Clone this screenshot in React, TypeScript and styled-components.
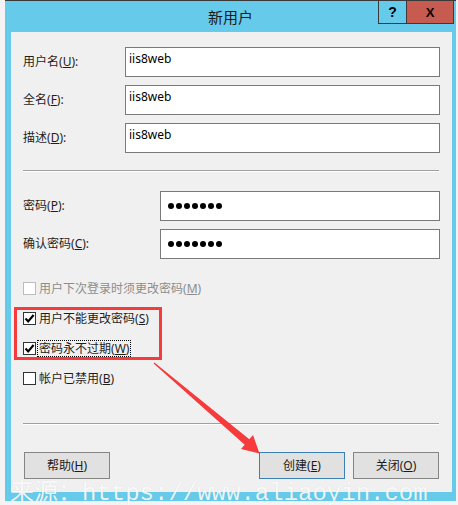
import React from "react";
import styled, { createGlobalStyle } from "styled-components";

const Global = createGlobalStyle`
  html, body { margin: 0; padding: 0; background: #f3f3f3; }
  body {
    width: 458px; height: 505px; overflow: hidden;
    font-family: "Noto Sans", "Noto Sans CJK SC", sans-serif;
  }
`;

const Stage = styled.div`
  position: relative;
  width: 458px;
  height: 505px;
  padding-left: 5px;
  box-sizing: border-box;
  overflow: hidden;
`;

const Frame = styled.div`
  width: 451px;
  height: 501px;
  box-sizing: border-box;
  background: #66caea;
  border-top: 1px solid #3a3a3a;
  display: flex;
  flex-direction: column;
`;

const TitleBar = styled.div`
  flex: none;
  height: 31px;
  display: grid;
`;

const Title = styled.div`
  grid-area: 1 / 1;
  justify-self: center;
  align-self: center;
  font-family: "Noto Sans CJK SC", sans-serif;
  font-size: 15px;
  color: #1a1a1a;
  line-height: 20px;
`;

const CaptionButtons = styled.div`
  grid-area: 1 / 1;
  justify-self: end;
  align-self: start;
  margin-right: 2px;
  display: flex;
  height: 22px;
  border: 1px solid #3a3a3a;
  border-top: none;
`;

const CaptionButton = styled.div<{ $w: number; $bg: string; $size: number }>`
  width: ${(p) => p.$w}px;
  height: 22px;
  background: ${(p) => p.$bg};
  display: flex;
  align-items: center;
  justify-content: center;
  font-family: "Liberation Sans", Arial, sans-serif;
  font-weight: 900;
  font-size: ${(p) => p.$size}px;
  color: #000;
  & + & { border-left: 1px solid #3a3a3a; }
`;

const Content = styled.div`
  position: relative;
  flex: 1;
  margin: 0 4px 9px 6px;
  background: #f0f0f0;
  padding: 15px 12px 0 12px;
  display: flex;
  flex-direction: column;
`;

const FieldGroup = styled.div<{ $mt: number }>`
  display: flex;
  flex-direction: column;
  gap: 8px;
  margin-top: ${(p) => p.$mt}px;
`;

const FieldRow = styled.div<{ $labelW: number }>`
  display: grid;
  grid-template-columns: ${(p) => p.$labelW}px 1fr;
  align-items: center;
  height: 30px;
`;

const Label = styled.div`
  font-size: 12px;
  line-height: 16px;
  color: #1e1e1e;
  white-space: nowrap;
`;

const TextBox = styled.div`
  height: 30px;
  box-sizing: border-box;
  background: #fff;
  border: 1px solid #7a7a7a;
  padding: 3px 3px 0 3px;
  font-size: 12px;
  line-height: 16px;
  color: #000;
`;

const DotRow = styled.div`
  display: flex;
  gap: 2px;
  padding: 8px 0 0 4px;
`;

const Dot = styled.span`
  width: 6px;
  height: 6px;
  border-radius: 50%;
  background: #000;
`;

const Separator = styled.div<{ $mt: number }>`
  margin-top: ${(p) => p.$mt}px;
  margin-right: 1px;
  height: 0;
  border-top: 1px solid #a0a0a0;
  border-bottom: 1px solid #ffffff;
`;

const CheckList = styled.div`
  margin-top: 14px;
  display: flex;
  flex-direction: column;
`;

const CheckRow = styled.div<{ $disabled?: boolean }>`
  height: 30px;
  display: flex;
  align-items: center;
  gap: 1px;
  color: ${(p) => (p.$disabled ? "#8d8d8d" : "#1e1e1e")};
`;

const Box = styled.span<{ $disabled?: boolean }>`
  width: 13px;
  height: 13px;
  box-sizing: border-box;
  background: #fff;
  border: 1px solid ${(p) => (p.$disabled ? "#bcbcbc" : "#333333")};
  display: flex;
  align-items: center;
  justify-content: center;
`;

const CheckText = styled.span<{ $focus?: boolean }>`
  font-size: 12px;
  line-height: 15px;
  padding: 0 1px;
  border: 1px ${(p) => (p.$focus ? "dotted #000" : "solid transparent")};
  white-space: nowrap;
`;

const ButtonRow = styled.div`
  margin-top: 27px;
  padding: 0 1px;
  display: flex;
  gap: 8px;
`;

const Spacer = styled.div`
  flex: 1;
`;

const PushButton = styled.div<{ $default?: boolean }>`
  width: 86px;
  height: 27px;
  box-sizing: border-box;
  background: #e1e1e1;
  border: 1px solid ${(p) => (p.$default ? "#3c7fb1" : "#858585")};
  display: flex;
  align-items: center;
  justify-content: center;
  font-size: 12px;
  line-height: 16px;
  color: #1a1a1a;
`;

const Annotation = styled.svg`
  position: absolute;
  left: 0;
  top: 0;
  pointer-events: none;
`;

const Watermark = styled.div`
  position: absolute;
  left: 10px;
  top: 482px;
  font-family: "Liberation Mono", "Noto Sans CJK SC", monospace;
  font-size: 24px;
  line-height: 24px;
  color: rgba(255, 255, 255, 0.9);
  text-shadow: 0 0 1px rgba(0, 0, 0, 0.12);
  white-space: pre;
  pointer-events: none;
`;

const Check = () => (
  <svg width="11" height="11" viewBox="0 0 11 11">
    <path d="M1.5 5.5 L4.2 8.4 L9.6 2" fill="none" stroke="#000" strokeWidth="2.2" />
  </svg>
);

const Key = ({ k }: { k: string }) => (
  <>
    (<u>{k}</u>)
  </>
);

const Password = () => (
  <TextBox>
    <DotRow>
      {Array.from({ length: 7 }).map((_, i) => (
        <Dot key={i} />
      ))}
    </DotRow>
  </TextBox>
);

export default function App() {
  return (
    <>
      <Global />
      <Stage>
        <Frame>
          <TitleBar>
            <Title>新用户</Title>
            <CaptionButtons>
              <CaptionButton $w={27} $bg="#66caea" $size={14}>?</CaptionButton>
              <CaptionButton $w={46} $bg="#c75b50" $size={13}>X</CaptionButton>
            </CaptionButtons>
          </TitleBar>
          <Content>
            <FieldGroup $mt={0}>
              <FieldRow $labelW={102}>
                <Label>用户名<Key k="U" />:</Label>
                <TextBox>iis8web</TextBox>
              </FieldRow>
              <FieldRow $labelW={102}>
                <Label>全名<Key k="F" />:</Label>
                <TextBox>iis8web</TextBox>
              </FieldRow>
              <FieldRow $labelW={102}>
                <Label>描述<Key k="D" />:</Label>
                <TextBox>iis8web</TextBox>
              </FieldRow>
            </FieldGroup>
            <Separator $mt={17} />
            <FieldGroup $mt={19}>
              <FieldRow $labelW={137}>
                <Label>密码<Key k="P" />:</Label>
                <Password />
              </FieldRow>
              <FieldRow $labelW={137}>
                <Label>确认密码<Key k="C" />:</Label>
                <Password />
              </FieldRow>
            </FieldGroup>
            <CheckList>
              <CheckRow $disabled>
                <Box $disabled />
                <CheckText>用户下次登录时须更改密码<Key k="M" /></CheckText>
              </CheckRow>
              <CheckRow>
                <Box><Check /></Box>
                <CheckText>用户不能更改密码<Key k="S" /></CheckText>
              </CheckRow>
              <CheckRow>
                <Box><Check /></Box>
                <CheckText $focus>密码永不过期<Key k="W" /></CheckText>
              </CheckRow>
              <CheckRow>
                <Box />
                <CheckText>帐户已禁用<Key k="B" /></CheckText>
              </CheckRow>
            </CheckList>
            <Separator $mt={30} />
            <ButtonRow>
              <PushButton>帮助<Key k="H" /></PushButton>
              <Spacer />
              <PushButton $default>创建<Key k="E" /></PushButton>
              <PushButton>关闭<Key k="O" /></PushButton>
            </ButtonRow>
            <Annotation width="441" height="460" viewBox="11 32 441 460">
              <rect x="15.5" y="308.5" width="145" height="50" fill="none" stroke="#f53b3b" strokeWidth="3" />
              <polygon
                points="153.6,363.4 154.4,362.6 249.3,439.3 253,435 259.5,453.5 241,449 244.7,444.7"
                fill="#f53b3b"
              />
            </Annotation>
          </Content>
        </Frame>
        <Watermark>来源：https://www.aliaoyin.com</Watermark>
      </Stage>
    </>
  );
}
